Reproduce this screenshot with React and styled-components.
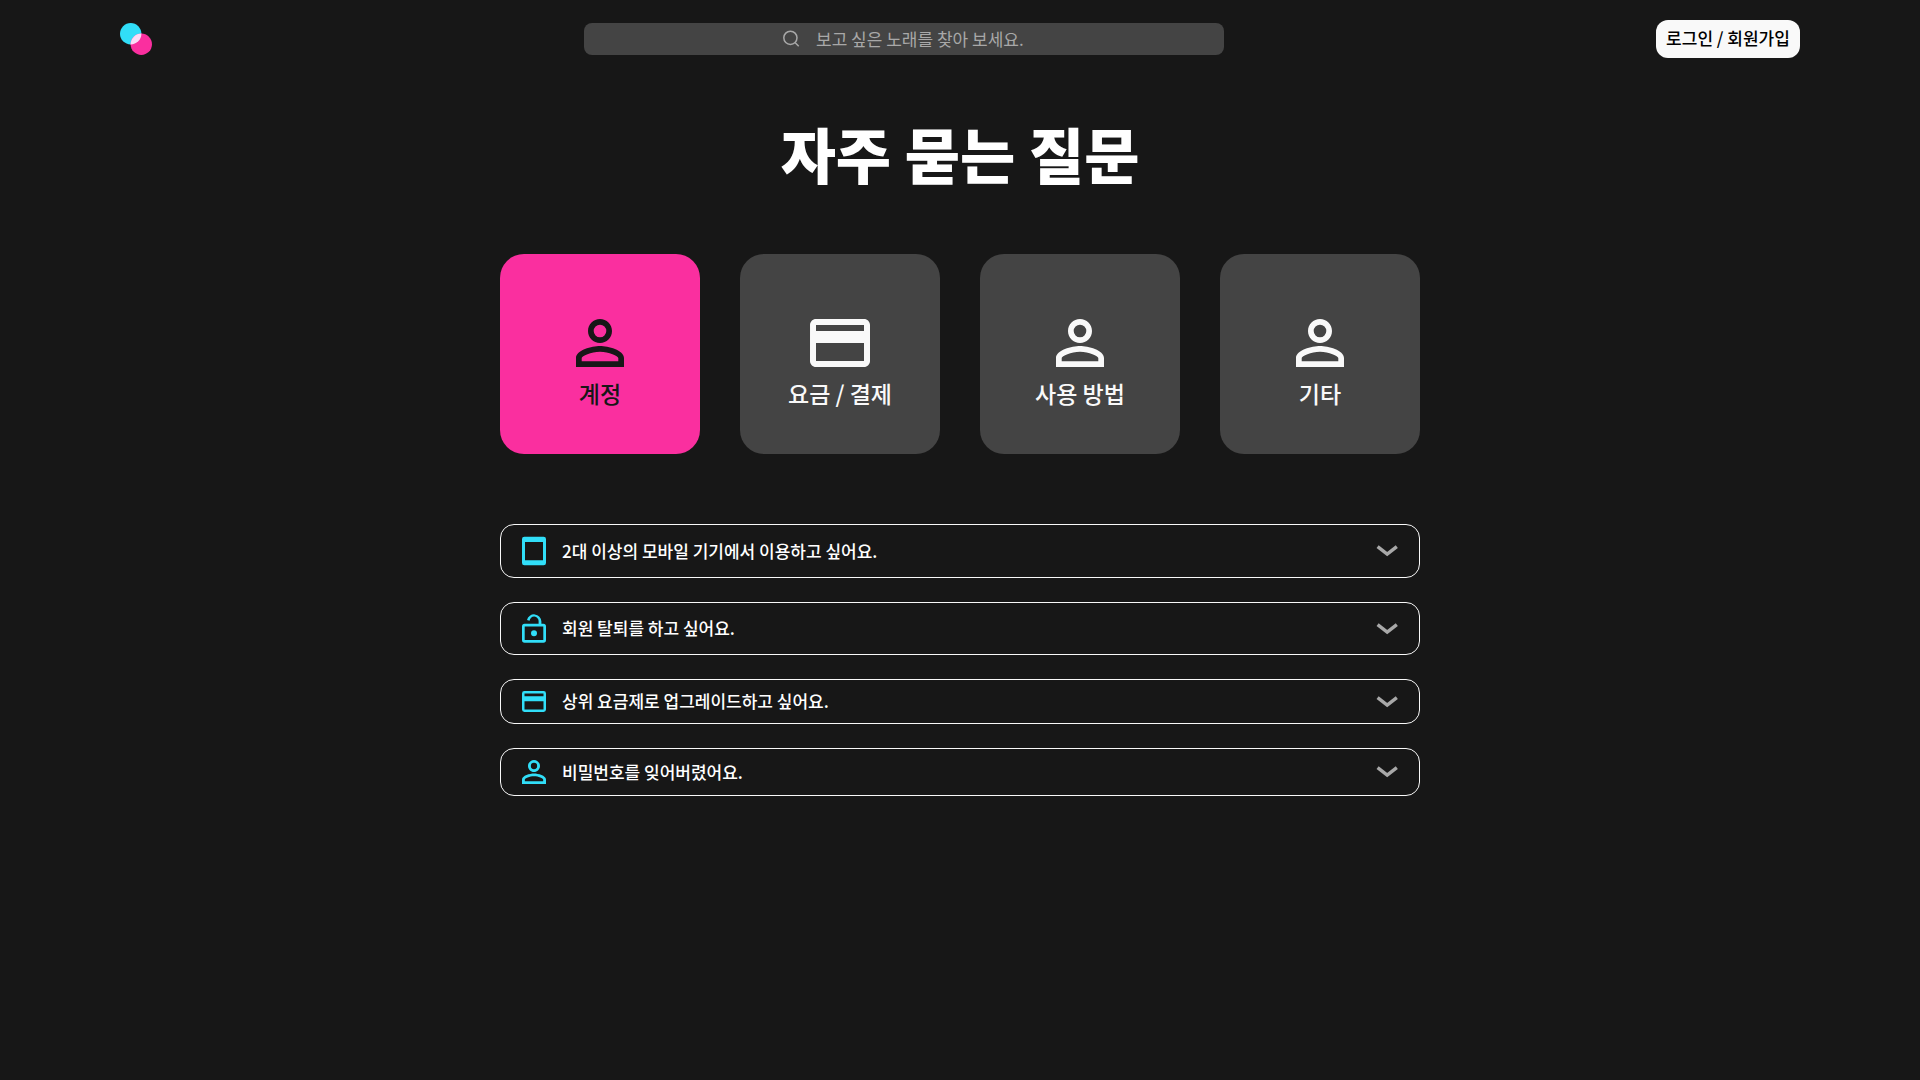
import React, { useState } from "react";
import styled, { createGlobalStyle } from "styled-components";

const GlobalStyle = createGlobalStyle`
  *, *::before, *::after { box-sizing: border-box; }
  body {
    margin: 0;
    background: #171717;
    color: #f9f9f9;
    font-family: "Noto Sans CJK KR", sans-serif;
  }
  button, input { font-family: inherit; }
`;

const Header = styled.header`
  display: flex;
  align-items: center;
  justify-content: space-between;
  padding: 20px 120px;
`;

const LogoLink = styled.a`
  display: flex;
`;

const SearchBox = styled.label`
  display: flex;
  align-items: center;
  justify-content: center;
  gap: 16px;
  width: 640px;
  height: 32px;
  border-radius: 8px;
  background: #444444;
  color: #a8a8a8;
`;

const SearchInput = styled.input`
  width: 210px;
  height: 28px;
  padding: 0 0 2px;
  border: 0;
  outline: 0;
  background: transparent;
  color: #f9f9f9;
  font-size: 17px;
  &::placeholder { color: #a8a8a8; opacity: 1; }
`;

const LoginButton = styled.button`
  width: 144px;
  height: 38px;
  padding: 0 0 3px;
  border: 0;
  border-radius: 12px;
  background: #f9f9f9;
  color: #000000;
  font-size: 17px;
  font-weight: 500;
  line-height: 24px;
  white-space: nowrap;
  cursor: pointer;
`;

const Main = styled.main`
  display: flex;
  flex-direction: column;
  align-items: center;
  padding: 31px 24px 80px;
`;

const Title = styled.h1`
  margin: 0;
  color: #ffffff;
  font-size: 60px;
  font-weight: 900;
  line-height: 88px;
`;

const Categories = styled.div`
  display: flex;
  flex-wrap: wrap;
  justify-content: center;
  gap: 40px;
  margin-top: 57px;
`;

const CategoryCard = styled.button`
  display: flex;
  flex-direction: column;
  align-items: center;
  width: 200px;
  height: 200px;
  padding: 53px 0 0;
  border: 0;
  border-radius: 24px;
  background: ${(p) => (p.$active ? "#fa2f9f" : "#444444")};
  color: ${(p) => (p.$active ? "#171717" : "#f9f9f9")};
  font-size: 23px;
  font-weight: 500;
  line-height: 28px;
  cursor: pointer;
`;

const FaqList = styled.div`
  display: flex;
  flex-direction: column;
  gap: 24px;
  width: 100%;
  max-width: 920px;
  margin-top: 70px;
`;

const FaqRow = styled.button`
  display: flex;
  align-items: center;
  gap: 16px;
  width: 100%;
  padding: 11px 21px;
  border: 1px solid #f9f9f9;
  border-radius: 14px;
  background: transparent;
  color: #ffffff;
  font-size: 17px;
  font-weight: 500;
  line-height: 19px;
  text-align: left;
  cursor: pointer;
`;

const Question = styled.span`
  flex: 1;
  padding-bottom: 2px;
`;

const Icon = styled.svg`
  display: block;
  flex: none;
`;

const Logo = () => (
  <Icon width="32" height="32" viewBox="0 0 32 32" aria-hidden="true">
    <defs>
      <clipPath id="overlap"><circle cx="10.7" cy="10.7" r="10.7" /></clipPath>
    </defs>
    <circle cx="10.7" cy="10.7" r="10.7" fill="#31def8" />
    <circle cx="21.3" cy="21.3" r="10.7" fill="#fa2f9f" />
    <circle cx="21.3" cy="21.3" r="10.7" fill="#fbdcf6" clipPath="url(#overlap)" />
  </Icon>
);

const SearchIcon = () => (
  <Icon width="18" height="18" viewBox="0 0 18 18" fill="none" stroke="currentColor" strokeWidth="1.5" aria-hidden="true">
    <circle cx="8.4" cy="7.8" r="6.6" />
    <path d="M13 12.5l3.7 3.7" />
  </Icon>
);

const personPath =
  "M12 5.9a2.1 2.1 0 1 1 0 4.2 2.1 2.1 0 0 1 0-4.2m0 9c2.97 0 6.1 1.46 6.1 2.1v1.1H5.9V17c0-.64 3.13-2.1 6.1-2.1M12 4C9.79 4 8 5.79 8 8s1.79 4 4 4 4-1.79 4-4-1.79-4-4-4zm0 9c-2.67 0-8 1.34-8 4v3h16v-3c0-2.66-5.33-4-8-4z";
const cardPath =
  "M20 4H4c-1.11 0-1.99.89-1.99 2L2 18c0 1.11.89 2 2 2h16c1.11 0 2-.89 2-2V6c0-1.11-.89-2-2-2zm0 14H4v-6h16v6zm0-10H4V6h16v2z";

const categoryIcons = { person: personPath, card: cardPath };

const CategoryIcon = ({ name }) => (
  <Icon width="72" height="72" viewBox="0 0 24 24" fill="currentColor" aria-hidden="true">
    <path d={categoryIcons[name]} />
  </Icon>
);

const faqIcons = {
  tablet: {
    viewBox: "0 0 24 30",
    height: 30,
    path: "M2.4 .7h19.2A2.4 2.4 0 0 1 24 3.1v23.8a2.4 2.4 0 0 1-2.4 2.4H2.4A2.4 2.4 0 0 1 0 26.900V3.100A2.4 2.4 0 0 1 2.400 .7zM3 6v18.200h18V6z",
  },
  lock: {
    viewBox: "0 0 24 29",
    height: 29,
    path: "M21.400 9.800H19.400V7.400a7.300 7.300 0 0 0-14.400-1.400l2.600 .8a4.500 4.500 0 0 1 9 .6v2.400H2.600A2.600 2.600 0 0 0 0 12.400v13.700a2.600 2.600 0 0 0 2.600 2.600h18.800a2.600 2.600 0 0 0 2.600-2.600V12.400a2.600 2.600 0 0 0-2.600-2.600zM21.300 26H2.700V12.500h18.600zM12 22.200a3 3 0 1 0 0-6 3 3 0 0 0 0 6z",
  },
  card: {
    viewBox: "0 0 24 21",
    height: 21,
    path: "M21.600 0H2.400A2.400 2.400 0 0 0 0 2.400v16.200a2.400 2.400 0 0 0 2.400 2.400h19.200a2.400 2.400 0 0 0 2.400-2.400V2.400A2.400 2.400 0 0 0 21.600 0zM21.500 18.500h-19V10.300h19zM21.500 5.200h-19V2.600h19z",
  },
  person: { viewBox: "4 4 16 16", height: 24, path: personPath },
};

const FaqIcon = ({ name }) => (
  <Icon width="24" height={faqIcons[name].height} viewBox={faqIcons[name].viewBox} fill="#31def8" fillRule="evenodd" aria-hidden="true">
    <path d={faqIcons[name].path} />
  </Icon>
);

const Chevron = () => (
  <Icon width="22" height="12" viewBox="0 0 22 12" fill="none" stroke="#a8a8a8" strokeWidth="3.4" aria-hidden="true">
    <path d="M1.600 1.700L11.200 9.200l9.600-7.500" />
  </Icon>
);

const categories = [
  { label: "계정", icon: "person" },
  { label: "요금 / 결제", icon: "card" },
  { label: "사용 방법", icon: "person" },
  { label: "기타", icon: "person" },
];

const questions = [
  { text: "2대 이상의 모바일 기기에서 이용하고 싶어요.", icon: "tablet" },
  { text: "회원 탈퇴를 하고 싶어요.", icon: "lock" },
  { text: "상위 요금제로 업그레이드하고 싶어요.", icon: "card" },
  { text: "비밀번호를 잊어버렸어요.", icon: "person" },
];

export default function App() {
  const [active, setActive] = useState(0);
  return (
    <>
      <GlobalStyle />
      <Header>
        <LogoLink href="#" aria-label="홈"><Logo /></LogoLink>
        <SearchBox>
          <SearchIcon />
          <SearchInput type="text" placeholder="보고 싶은 노래를 찾아 보세요." />
        </SearchBox>
        <LoginButton type="button">로그인 / 회원가입</LoginButton>
      </Header>
      <Main>
        <Title>자주 묻는 질문</Title>
        <Categories>
          {categories.map((c, i) => (
            <CategoryCard key={c.label} type="button" $active={i === active} onClick={() => setActive(i)}>
              <CategoryIcon name={c.icon} />
              {c.label}
            </CategoryCard>
          ))}
        </Categories>
        <FaqList>
          {questions.map((q) => (
            <FaqRow key={q.text} type="button">
              <FaqIcon name={q.icon} />
              <Question>{q.text}</Question>
              <Chevron />
            </FaqRow>
          ))}
        </FaqList>
      </Main>
    </>
  );
}
